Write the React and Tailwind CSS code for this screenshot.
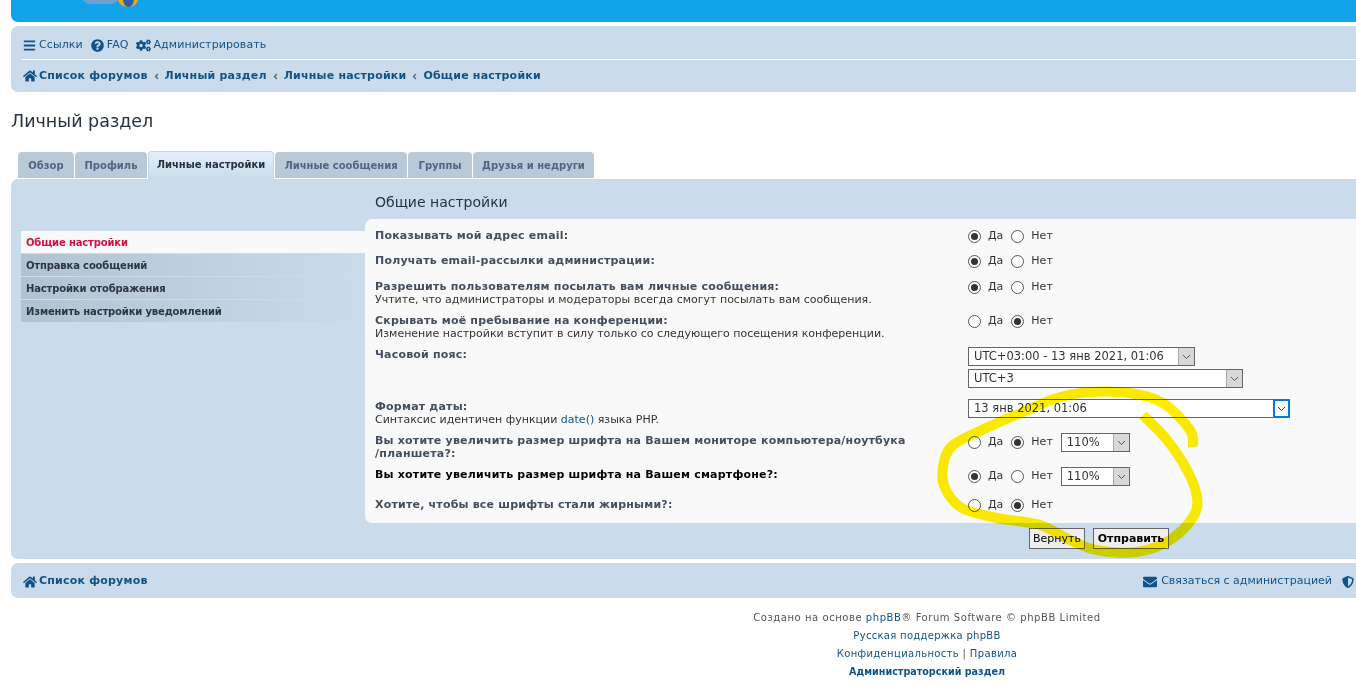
import { FaBars, FaQuestionCircle, FaCogs, FaHome, FaEnvelope, FaShieldAlt, FaAngleLeft } from 'react-icons/fa';

const TABS = [
  { label: 'Обзор', w: 'w-[56px]' },
  { label: 'Профиль', w: 'w-[72px]' },
  { label: 'Личные настройки', w: 'w-[126px]', active: true },
  { label: 'Личные сообщения', w: 'w-[132px]' },
  { label: 'Группы', w: 'w-[64px]' },
  { label: 'Друзья и недруги', w: 'w-[121px]' },
];

const SIDE = ['Отправка сообщений', 'Настройки отображения', 'Изменить настройки уведомлений'];

const SCRIBBLE = [
  [1193, 447], [1190, 430], [1163, 403], [1130, 393], [1090, 392], [1057, 398], [1023, 412], [982, 430],
  [952, 446], [943, 467], [945, 488], [962, 508], [997, 518], [1040, 525], [1070, 540], [1097, 550],
  [1137, 552], [1170, 540], [1193, 517], [1197, 497], [1187, 470], [1167, 440], [1143, 415],
];

// smooth line through the points
function smoothPath(pts) {
  let d = `M${pts[0][0]} ${pts[0][1]}`;
  for (let i = 0; i < pts.length - 1; i++) {
    const p0 = pts[Math.max(i - 1, 0)];
    const p1 = pts[i];
    const p2 = pts[i + 1];
    const p3 = pts[Math.min(i + 2, pts.length - 1)];
    d += `C${p1[0] + (p2[0] - p0[0]) / 6} ${p1[1] + (p2[1] - p0[1]) / 6} ${p2[0] - (p3[0] - p1[0]) / 6} ${p2[1] - (p3[1] - p1[1]) / 6} ${p2[0]} ${p2[1]}`;
  }
  return d;
}

function Radio({ checked, label }) {
  return (
    <span className="flex items-center gap-[7px]">
      <span className="w-[13px] h-[13px] rounded-full border border-[#555] bg-white flex items-center justify-center">
        {checked && <span className="w-[7px] h-[7px] rounded-full bg-[#333]" />}
      </span>
      <span className="text-[11px] leading-none text-[#333] -mt-[2px]">{label}</span>
    </span>
  );
}

function YesNo({ yes, className = '' }) {
  return (
    <div className={`flex items-center gap-[8px] ${className}`}>
      <Radio checked={yes} label="Да" />
      <Radio checked={!yes} label="Нет" />
    </div>
  );
}

function Select({ w, text, focus }) {
  return (
    <div className={`${w} h-[19px] border border-[#666] bg-white flex items-center justify-between text-[11.5px] text-[#333]`}>
      <span className="pl-[5px]">{text}</span>
      {focus ? (
        <span className="w-[17px] h-[19px] -mr-px border-2 border-[#0a78d7] bg-white flex items-center justify-center">
          <svg width="9" height="6" viewBox="0 0 9 6" fill="none" stroke="#333" strokeWidth="1"><path d="M1 1l3.5 3.5L8 1" /></svg>
        </span>
      ) : (
        <span className="w-[16px] h-[17px] bg-[#d8d8d8] border-l border-[#aaa] flex items-center justify-center">
          <svg width="9" height="6" viewBox="0 0 9 6" fill="none" stroke="#555" strokeWidth="1"><path d="M1 1l3.5 3.5L8 1" /></svg>
        </span>
      )}
    </div>
  );
}

function Row({ h, title, note, black, children }) {
  return (
    <div className={`flex ${h}`}>
      <div className="w-[593px] shrink-0 pr-[30px]">
        <div className={`text-[11px] leading-[13px] font-bold tracking-[0.2px] ${black ? 'text-black' : 'text-[#444e5c]'}`}>{title}</div>
        {note && <div className="text-[11px] leading-[13px] text-[#333]">{note}</div>}
      </div>
      <div>{children}</div>
    </div>
  );
}

function Crumb() {
  return <FaAngleLeft size={9} className="mx-[4px] text-[#536482]" />;
}

export default function App() {
  return (
    <div className="w-[1356px] h-[685px] overflow-hidden bg-white relative font-['DejaVu_Sans','Liberation_Sans',sans-serif] text-[#333]">
      <div className="w-[1400px] ml-[11px]">
        <div className="h-[22px] bg-[#12a3eb] rounded-b-[7px] relative overflow-hidden">
          <svg className="absolute left-[62px] top-0" width="70" height="8" viewBox="0 0 70 8">
            <path d="M10 0h35q-2 4-8 4H18q-6 0-8-4z" fill="#6f9fd0" />
            <path d="M45 0h20q-2 7-10 7t-10-7z" fill="#e9a825" />
            <path d="M50 0h11q-1 7-5.500 7T50 0z" fill="#2a5fa8" />
          </svg>
        </div>

        <div className="mt-[4px] h-[66px] bg-[#cadceb] rounded-[7px] px-[11px] text-[#105289]">
          <div className="h-[34px] flex items-center border-b border-white pt-[6px] text-[11px] tracking-[0.1px]">
            <FaBars size={13} className="ml-px mr-[3px]" />
            <span className="mr-[8px]">Ссылки</span>
            <FaQuestionCircle size={13} className="mr-[3px]" />
            <span className="mr-[8px]">FAQ</span>
            <FaCogs size={15} className="mr-[2px]" />
            <span>Администрировать</span>
          </div>
          <div className="h-[32px] flex items-center text-[11px] font-bold tracking-[0.2px]">
            <FaHome size={14} className="ml-px mr-[2px]" />
            <span>Список форумов</span>
            <Crumb />
            <span>Личный раздел</span>
            <Crumb />
            <span>Личные настройки</span>
            <Crumb />
            <span>Общие настройки</span>
          </div>
        </div>

        <h2 className="mt-[18px] h-[24px] text-[17.5px] leading-[22px] font-normal text-[#28313f]">Личный раздел</h2>

        <div className="mt-[17px] ml-[7px] flex gap-px h-[28px] items-end">
          {TABS.map((t) => (
            <div
              key={t.label}
              className={`${t.w} rounded-t-[4px] flex items-center justify-center text-[10px] font-bold ${
                t.active
                  ? 'h-[28px] pb-[2px] bg-gradient-to-b from-[#e1effc] to-[#cadceb] border border-b-0 border-[#c4d8ea] text-[#28313f]'
                  : 'h-[26px] mb-px bg-[#b9c9d7] text-[#536482]'
              }`}
            >
              {t.label}
            </div>
          ))}
        </div>

        <div className="h-[380px] bg-[#cadceb] rounded-[7px] flex pt-[15px]">
          <div className="w-[354px] shrink-0 pl-[10px] pt-[37px]">
            <div className="h-[22px] pl-[5px] flex items-center bg-[#f9f9f9] text-[10px] tracking-[-0.15px] font-bold text-[#d31141]">Общие настройки</div>
            {SIDE.map((s) => (
              <div key={s} className="h-[22px] mt-px pl-[5px] flex items-center bg-gradient-to-r from-[#b2c2d1] to-[#cadceb] text-[10px] tracking-[-0.15px] font-bold text-[#2d3540]">
                {s}
              </div>
            ))}
          </div>
          <div className="flex-1">
            <h3 className="pl-[10px] h-[25px] text-[14px] leading-[17px] font-normal text-[#28313f]">Общие настройки</h3>
            <div className="h-[304px] bg-[#f9f9f9] rounded-[7px] pl-[10px] pt-[10px]">
              <Row h="h-[25px]" title="Показывать мой адрес email:"><YesNo yes className="mt-px" /></Row>
              <Row h="h-[26px]" title="Получать email-рассылки администрации:"><YesNo yes className="mt-px" /></Row>
              <Row h="h-[34px]" title="Разрешить пользователям посылать вам личные сообщения:" note="Учтите, что администраторы и модераторы всегда смогут посылать вам сообщения."><YesNo yes className="mt-px" /></Row>
              <Row h="h-[34px]" title="Скрывать моё пребывание на конференции:" note="Изменение настройки вступит в силу только со следующего посещения конференции."><YesNo yes={false} className="mt-px" /></Row>
              <Row h="h-[52px]" title="Часовой пояс:">
                <div className="flex flex-col gap-[3px] -mt-px">
                  <Select w="w-[227px]" text="UTC+03:00 - 13 янв 2021, 01:06" />
                  <Select w="w-[275px]" text="UTC+3" />
                </div>
              </Row>
              <Row h="h-[34px]" title="Формат даты:" note={<>Синтаксис идентичен функции <span className="text-[#105289]">date()</span> языка PHP.</>}>
                <div className="-mt-px"><Select w="w-[322px]" text="13 янв 2021, 01:06" focus /></div>
              </Row>
              <Row h="h-[34px]" title={<>Вы хотите увеличить размер шрифта на Вашем мониторе компьютера/ноутбука<br />/планшета?:</>}>
                <div className="flex items-center gap-[8px] -mt-px"><YesNo yes={false} /><Select w="w-[69px]" text="110%" /></div>
              </Row>
              <Row h="h-[30px]" black title="Вы хотите увеличить размер шрифта на Вашем смартфоне?:">
                <div className="flex items-center gap-[8px] -mt-px"><YesNo yes /><Select w="w-[69px]" text="110%" /></div>
              </Row>
              <Row h="h-[20px]" title="Хотите, чтобы все шрифты стали жирными?:"><YesNo yes={false} className="mt-px" /></Row>
            </div>
            <div className="mt-[5px] w-[804px] flex justify-end gap-[8px]">
              <div className="w-[56px] h-[21px] border border-[#666] bg-[#efefef] text-[11px] leading-[19px] text-center text-black">Вернуть</div>
              <div className="w-[76px] h-[21px] border border-[#666] bg-[#efefef] text-[11px] leading-[19px] text-center font-bold text-black">Отправить</div>
            </div>
          </div>
        </div>

        <div className="mt-[4px] h-[35px] bg-[#cadceb] rounded-[7px] pl-[11px] pr-[57px] pt-[2px] flex items-center justify-between text-[#105289]">
          <div className="flex items-center text-[11px] font-bold tracking-[0.2px]"><FaHome size={14} className="ml-px mr-[2px]" />Список форумов</div>
          <div className="flex items-center text-[11px]">
            <FaEnvelope size={14} className="mr-[4px]" />Связаться с администрацией
            <FaShieldAlt size={12} className="ml-[10px]" />
          </div>
        </div>
      </div>

      <div className="absolute left-[497px] top-[609px] w-[860px] text-center text-[10px] leading-[18px] text-[#555]">
        <div className="tracking-[0.55px]">Создано на основе <span className="text-[#105289]">phpBB</span>® Forum Software © phpBB Limited</div>
        <div className="tracking-[0.3px] text-[#105289]">Русская поддержка phpBB</div>
        <div className="tracking-[0.35px] text-[#105289]">Конфиденциальность <span className="text-[#555]">|</span> Правила</div>
        <div className="text-[9.6px] text-[#105289] font-bold">Администраторский раздел</div>
      </div>

      <svg className="absolute left-0 top-0 pointer-events-none mix-blend-multiply" width="1356" height="685" fill="none">
        <path d={smoothPath(SCRIBBLE)} stroke="#ffee00" strokeWidth="10" strokeLinejoin="round" />
      </svg>
    </div>
  );
}
